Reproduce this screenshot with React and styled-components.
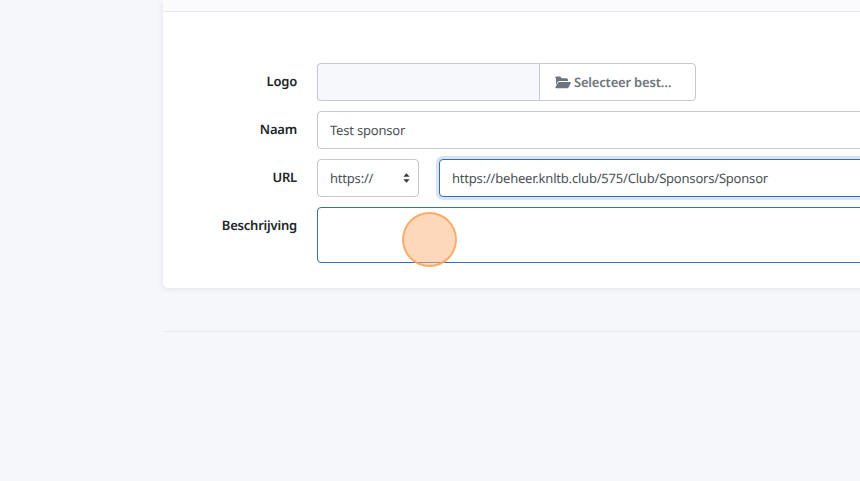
import React from 'react';
import styled, { createGlobalStyle } from 'styled-components';

const GlobalStyle = createGlobalStyle`
  html, body {
    margin: 0;
    height: 100%;
    overflow: hidden;
    background: #f6f7fb;
  }
  * {
    box-sizing: border-box;
  }
`;

const Page = styled.div`
  position: relative;
  width: 860px;
  height: 481px;
  overflow: hidden;
  padding-left: 163px;
  font-family: "Noto Sans", "Open Sans", sans-serif;
  font-size: 13px;
  letter-spacing: -0.2px;
  text-rendering: geometricPrecision;
  color: #495057;
`;

const Column = styled.div`
  width: 860px;
`;

const Card = styled.div`
  background: #fff;
  border-radius: 0 0 5px 5px;
  box-shadow: 0 1px 6px rgba(40, 50, 80, 0.1);
  padding-bottom: 25px;
`;

const CardHeader = styled.div`
  height: 12px;
  background: #fbfbfd;
  border-bottom: 1px solid #e6e8ee;
`;

const Form = styled.div`
  display: flex;
  flex-direction: column;
  gap: 10px;
  padding-top: 51px;
`;

const Row = styled.div`
  display: flex;
  gap: 20px;
`;

const Label = styled.div`
  flex: 0 0 134px;
  padding-top: 9px;
  text-align: right;
  font-weight: 600;
  line-height: 18px;
  color: #212529;
`;

const Fields = styled.div`
  flex: 1;
  display: flex;
  min-width: 0;
`;

const Input = styled.div`
  height: 38px;
  flex: 1;
  padding: 0 12px;
  display: flex;
  align-items: center;
  background: #fff;
  border: 1px solid ${(p) => (p.$focus ? '#3a6db0' : '#c5c9cf')};
  border-radius: 4px;
  box-shadow: ${(p) => (p.$halo ? '0 0 0 3px #d8e4f4' : 'none')};
`;

const FileName = styled.div`
  width: 222px;
  height: 38px;
  background: #f6f8fc;
  border: 1px solid #c5c9cf;
  border-right: 0;
  border-radius: 4px 0 0 4px;
`;

const FileButton = styled.div`
  width: 157px;
  height: 38px;
  display: flex;
  align-items: center;
  gap: 3px;
  padding-left: 15px;
  background: #fff;
  border: 1px solid #c5c9cf;
  border-radius: 0 4px 4px 0;
  font-weight: 600;
  color: #6c757d;
`;

const Select = styled.div`
  width: 102px;
  height: 38px;
  margin-right: 20px;
  padding: 0 8px 0 12px;
  display: flex;
  align-items: center;
  justify-content: space-between;
  background: #fff;
  border: 1px solid #c5c9cf;
  border-radius: 4px;
`;

const TextArea = styled(Input)`
  height: 56px;
`;

const Divider = styled.div`
  margin-top: 43px;
  border-top: 1px solid #e9ebf0;
`;

const Cursor = styled.div`
  position: absolute;
  left: 402px;
  top: 212px;
  width: 55px;
  height: 55px;
  border-radius: 50%;
  background: rgba(251, 180, 125, 0.52);
  border: 2px solid rgba(250, 165, 95, 0.85);
`;

const FolderIcon = () => (
  <svg width="16" height="13" viewBox="0 0 16 13">
    <path
      fill="#6c757d"
      d="M0 2a1.5 1.5 0 0 1 1.5-1.5h3.6L6.8 2.2h4.7A1.5 1.5 0 0 1 13 3.7V5H4.4a2 2 0 0 0-1.8 1.1L1 9.2V2zM4.2 6h10.7c.7 0 1.1.7.8 1.3l-2.2 4.2a1.5 1.5 0 0 1-1.3.8H1.3c-.7 0-1.1-.7-.8-1.3L3 6.8c.3-.5.7-.8 1.2-.8z"
    />
  </svg>
);

const SortIcon = () => (
  <svg width="7" height="10" viewBox="0 0 8 11">
    <path fill="#343a40" d="M4 0l3.6 4.2H.4zM4 11L.4 6.8h7.2z" />
  </svg>
);

export default function App() {
  return (
    <Page>
      <GlobalStyle />
      <Column>
        <Card>
          <CardHeader />
          <Form>
            <Row>
              <Label>Logo</Label>
              <Fields>
                <FileName />
                <FileButton>
                  <FolderIcon />
                  Selecteer best…
                </FileButton>
              </Fields>
            </Row>
            <Row>
              <Label>Naam</Label>
              <Fields>
                <Input>Test sponsor</Input>
              </Fields>
            </Row>
            <Row>
              <Label>URL</Label>
              <Fields>
                <Select>
                  https://
                  <SortIcon />
                </Select>
                <Input $focus $halo>https://beheer.knltb.club/575/Club/Sponsors/Sponsor</Input>
              </Fields>
            </Row>
            <Row>
              <Label>Beschrijving</Label>
              <Fields>
                <TextArea $focus />
              </Fields>
            </Row>
          </Form>
        </Card>
        <Divider />
      </Column>
      <Cursor />
    </Page>
  );
}
